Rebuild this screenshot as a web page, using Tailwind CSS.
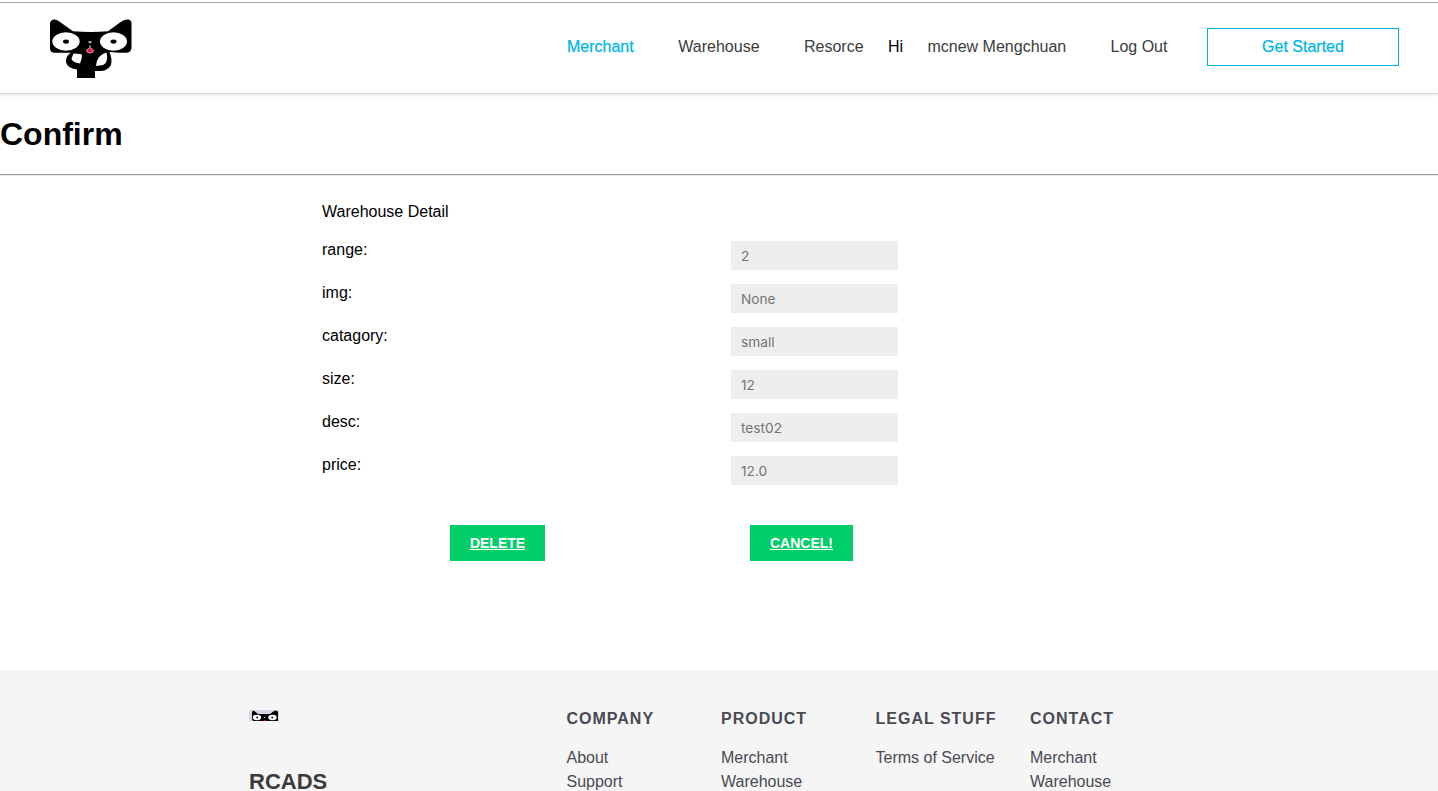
<!DOCTYPE html>
<html lang="en">
<head>
<meta charset="utf-8">
<title>Confirm</title>
<script src="https://cdn.jsdelivr.net/npm/@tailwindcss/browser@4"></script>
</head>
<body class="h-[791px] overflow-hidden bg-white font-['Liberation_Sans',Arial,sans-serif] text-base text-black">
<div class="h-[3px] border-b border-[#b0b0b0]"></div>
<header class="flex h-[91px] border-b border-[#d8d8d8] pl-[49px] shadow-[0_1px_3px_rgba(0,0,0,0.12)]">
  <svg class="mt-4 h-[60px] w-[84px] shrink-0" viewBox="0 0 84 60">
    <path d="M1 4Q2 0 6 .5Q8 .6 11 3L24 12.300Q42 13.500 59 12.300L71 3.500Q75 .5 78 .5Q82 0 82.500 4V29Q82 33.700 77 33.700H70L60.500 33Q63.500 40 62 46Q59 51.500 52 52H46V59H28V50.500Q18 49 17 43Q16.500 37 22 33.700H5Q1 33.500 1 29Z" fill="#000"/>
    <ellipse cx="17" cy="22.500" rx="13.700" ry="9.200" fill="#fff"/>
    <ellipse cx="64.500" cy="22.500" rx="13.500" ry="9.200" fill="#fff"/>
    <ellipse cx="17" cy="22.600" rx="3" ry="2.100" fill="#000"/>
    <ellipse cx="64.500" cy="22.600" rx="3" ry="2.100" fill="#000"/>
    <path d="M24.500 34.500Q29 34.500 33 35.500Q33 40 31 44.500L26.500 43.500Q22.500 41.500 22.500 39.500Z" fill="#fff"/>
    <path d="M57.500 33.500Q58.500 37 58 40Q57.500 44.500 54 46L47 47Q47 42 50 38Q53 34.500 57.500 33.500Z" fill="#fff"/>
    <path d="M39 22.500h4l-2 2zM40.500 26.500h1v2h-1z" fill="#fff"/>
    <path d="M37.500 31L41 28.500L44.500 31Q44.500 34 41 34Q37.500 34 37.500 31Z" fill="#d81b43" stroke="#f0d0d0" stroke-width=".7"/>
  </svg>
  <nav class="ml-[434px] flex items-start pt-8 leading-6 text-[#3b3b3b]">
    <a class="w-[111.300px] text-[#00b4e6] [-webkit-text-stroke:0.25px_#00b4e6]">Merchant</a>
    <a class="w-[125.700px]">Warehouse</a>
    <a class="w-[84px]">Resorce</a>
    <span class="w-[39.500px] text-black">Hi</span>
    <a class="w-[183px]">mcnew Mengchuan</a>
    <a class="w-[96.500px]">Log Out</a>
    <a class="-mt-[7px] h-[38px] w-48 border border-[#00b4e6] pt-1.5 text-center text-[#00b4e6] [-webkit-text-stroke:0.25px_#00b4e6]">Get Started</a>
  </nav>
</header>
<main class="h-[576px]">
  <h1 class="pt-[22px] text-[32px] leading-9 font-bold">Confirm</h1>
  <div class="mt-[22px] h-0.5 border-t border-b border-t-[#999] border-b-[#eee]"></div>
  <section class="ml-[322px] pt-6">
    <p class="leading-6">Warehouse Detail</p>
    <div class="mt-[17px] flex flex-col gap-3.5">
      <div class="flex h-[29px]"><span class="w-[409px] leading-[18px]">range:</span><span class="w-[167px] bg-[#eee] px-2.5 font-['Inter',sans-serif] text-[13.700px] leading-[30px] text-[#757575]">2</span></div>
      <div class="flex h-[29px]"><span class="w-[409px] leading-[18px]">img:</span><span class="w-[167px] bg-[#eee] px-2.5 font-['Inter',sans-serif] text-[13.700px] leading-[30px] text-[#757575]">None</span></div>
      <div class="flex h-[29px]"><span class="w-[409px] leading-[18px]">catagory:</span><span class="w-[167px] bg-[#eee] px-2.5 font-['Inter',sans-serif] text-[13.700px] leading-[30px] text-[#757575]">small</span></div>
      <div class="flex h-[29px]"><span class="w-[409px] leading-[18px]">size:</span><span class="w-[167px] bg-[#eee] px-2.5 font-['Inter',sans-serif] text-[13.700px] leading-[30px] text-[#757575]">12</span></div>
      <div class="flex h-[29px]"><span class="w-[409px] leading-[18px]">desc:</span><span class="w-[167px] bg-[#eee] px-2.5 font-['Inter',sans-serif] text-[13.700px] leading-[30px] text-[#757575]">test02</span></div>
      <div class="flex h-[29px]"><span class="w-[409px] leading-[18px]">price:</span><span class="w-[167px] bg-[#eee] px-2.5 font-['Inter',sans-serif] text-[13.700px] leading-[30px] text-[#757575]">12.0</span></div>
    </div>
    <div class="mt-10 ml-32 flex gap-[205px] text-center text-sm leading-9 font-bold text-white underline">
      <a class="h-9 w-[95px] bg-[#00ce68]">DELETE</a>
      <a class="h-9 w-[103px] bg-[#00ce68]">CANCEL!</a>
    </div>
  </section>
</main>
<footer class="flex h-[121px] bg-[#f5f5f5] pt-10 pl-[249px] text-[#4a4a52]">
  <div class="w-[317.500px]">
    <svg class="h-[11px] w-[30px]" viewBox="0 0 30 11">
      <path d="M0 0h30v11H0z" fill="#d3d8e4"/>
      <path d="M3 2Q4 0 6 1.500L9 4H21L25 1Q28-.5 29 2V11H5Q3 11 3 9Z" fill="#000"/>
      <ellipse cx="8" cy="7.500" rx="4.200" ry="2.700" fill="#fff"/><ellipse cx="23.500" cy="7.500" rx="4.200" ry="2.700" fill="#fff"/>
      <circle cx="8.200" cy="7.500" r=".9"/><circle cx="23.200" cy="7.500" r=".9"/>
      <path d="M15 7h1v1h-1z" fill="#ddd"/><path d="M14.500 10h2v1h-2z" fill="#d81b43"/>
    </svg>
    <h2 class="mt-[50px] text-[22px] leading-[22px] font-bold text-[#3b3b3b]">RCADS</h2>
  </div>
  <div class="w-[154.500px] whitespace-nowrap leading-6"><h3 class="-mt-[3px] mb-[15px] font-bold tracking-[1px]">COMPANY</h3><p>About</p><p>Support</p></div>
  <div class="w-[154.500px] whitespace-nowrap leading-6"><h3 class="-mt-[3px] mb-[15px] font-bold tracking-[1px]">PRODUCT</h3><p>Merchant</p><p>Warehouse</p></div>
  <div class="w-[154.500px] whitespace-nowrap leading-6"><h3 class="-mt-[3px] mb-[15px] font-bold tracking-[1px]">LEGAL STUFF</h3><p>Terms of Service</p></div>
  <div class="w-[154.500px] whitespace-nowrap leading-6"><h3 class="-mt-[3px] mb-[15px] font-bold tracking-[1px]">CONTACT</h3><p>Merchant</p><p>Warehouse</p></div>
</footer>
</body>
</html>
